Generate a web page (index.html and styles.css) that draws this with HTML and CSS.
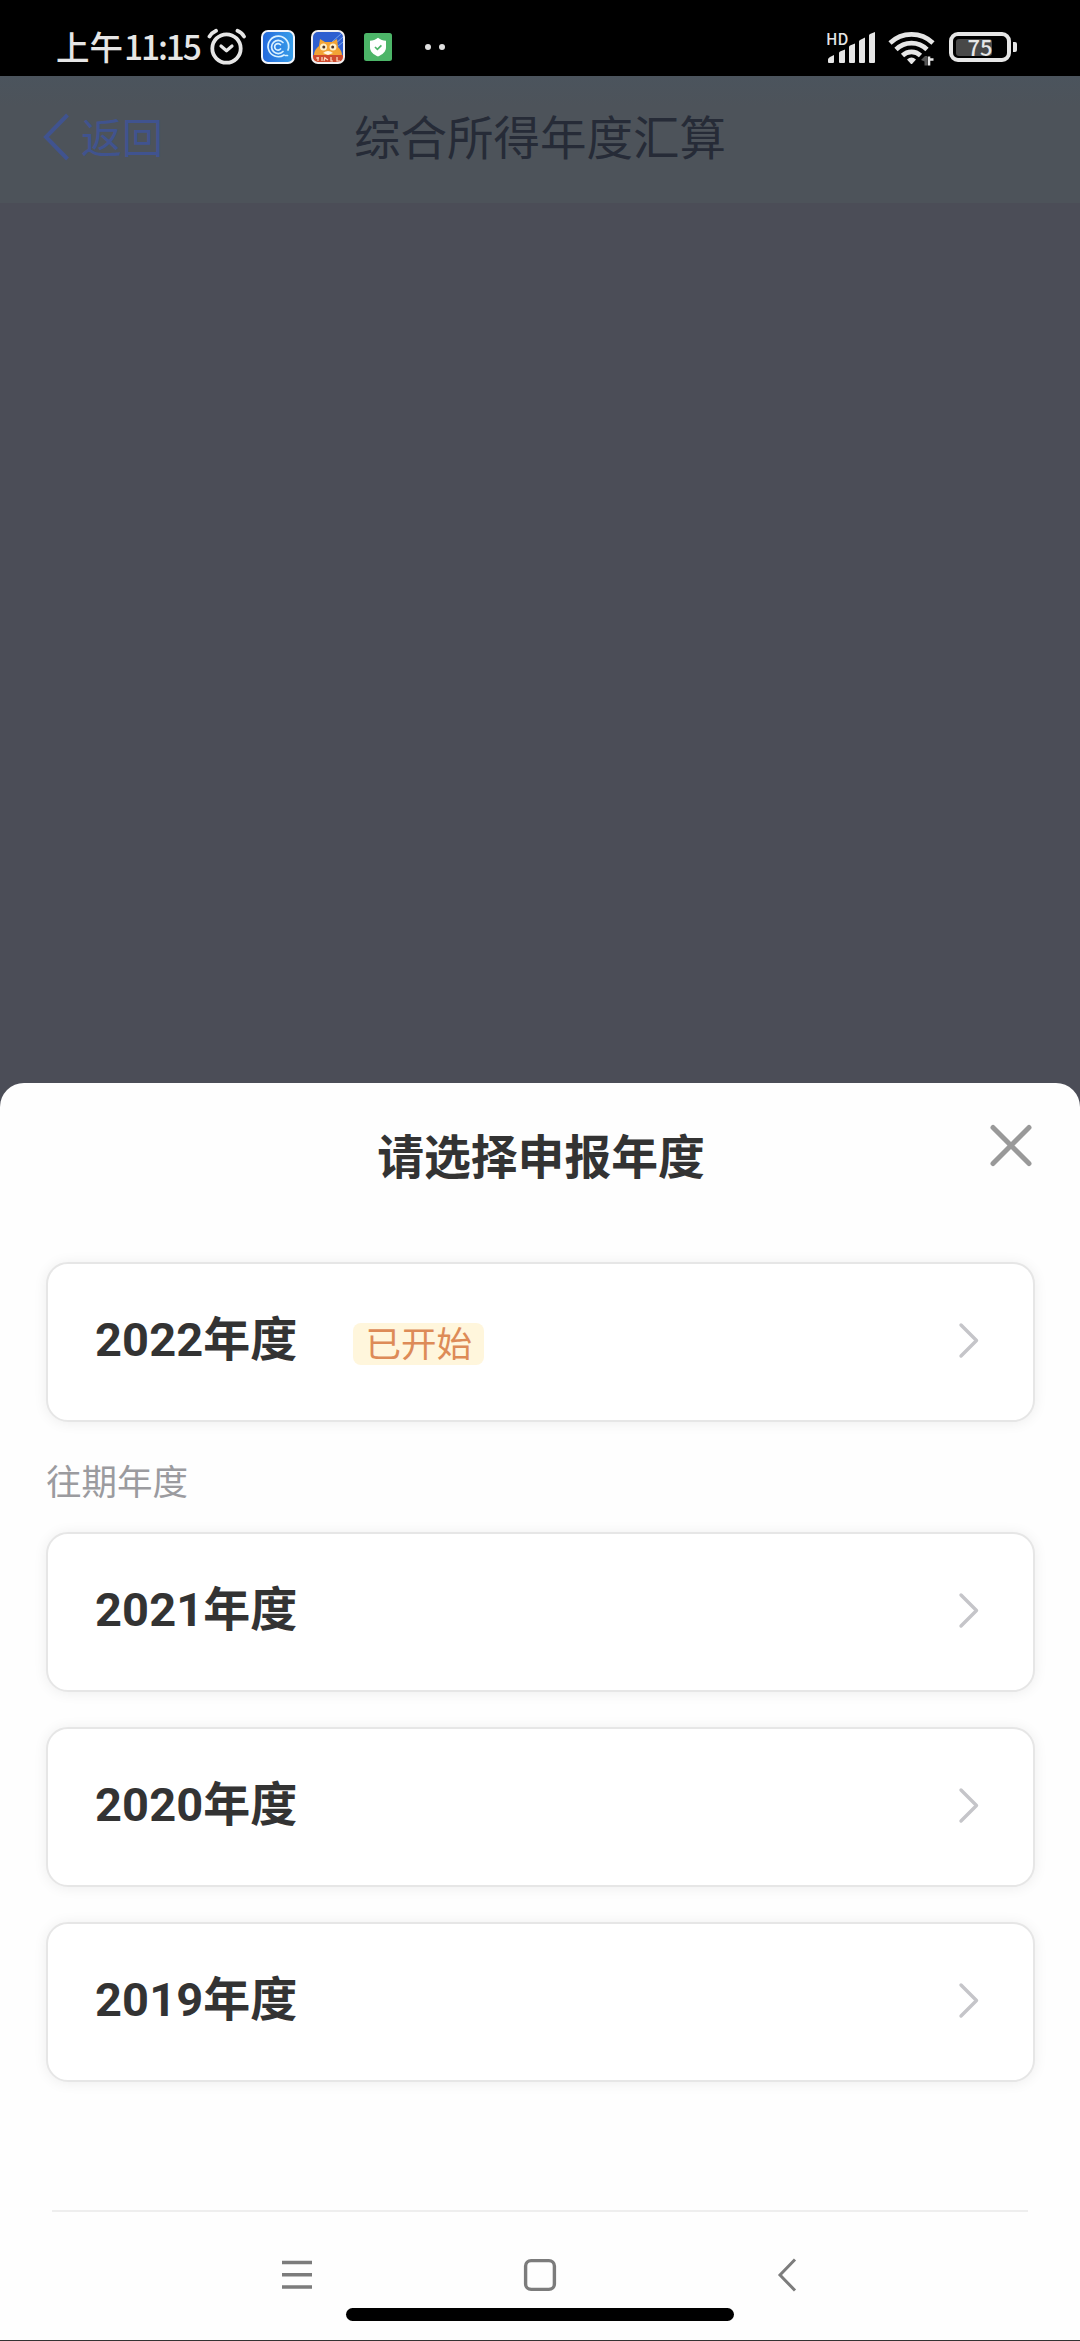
FILE: index.html
```html
<!DOCTYPE html>
<html lang="zh-CN">
<head>
<meta charset="utf-8">
<title>综合所得年度汇算</title>
<link rel="stylesheet" href="styles.css">
</head>
<body>
<div class="screen">
  <header class="status">
    <span class="clock"><span>上午</span><span class="digits">11:15</span></span>
    <svg class="alarm" width="40" height="38" viewBox="0 0 40 38" fill="none" stroke="#e6e6e6" stroke-linecap="round">
      <circle cx="19.500" cy="20.500" r="14.200" stroke-width="3.800"/>
      <path d="M14 18l5.500 4.800 5.500-4.800" stroke-width="3.200" stroke-linejoin="round"/>
      <path d="M2.500 8.500Q5 4.500 9 2.700M30.500 2.700Q35 4.500 37 8.500" stroke-width="3.800"/>
    </svg>
    <svg class="app app-one" width="34" height="34" viewBox="0 0 34 34" fill="none">
      <defs><linearGradient id="blue" x1="0" x2="1"><stop offset="0" stop-color="#2468dc"/><stop offset="1" stop-color="#38a0ea"/></linearGradient></defs>
      <rect x="1" y="1" width="32" height="32" rx="6" fill="url(#blue)" stroke="#f2f5fb" stroke-width="2"/>
      <g stroke="#d9f1ff" stroke-width="1.700" stroke-linecap="round">
        <path d="M24.500 25.500h2M23 25a10.300 10.300 0 1 1 4-5"/>
        <path d="M22 21.500a6.600 6.600 0 1 1 0-9"/>
        <path d="M19.500 19a3.300 3.300 0 1 1 0-4.300"/>
      </g>
    </svg>
    <svg class="app app-two" width="34" height="34" viewBox="0 0 34 34">
      <rect x="1" y="1" width="32" height="32" rx="6" fill="#2f5fd0"/>
      <path d="M21 12L31 3M24 14l8-7M26 17l6-5" stroke="#75a5f0" stroke-width="1"/>
      <path d="M3 26C3 20 6 18 8 16L9 9l5 3h7l5-3 1 8c3 3 4 5 4 9z" fill="#f2a335"/>
      <circle cx="12.500" cy="17" r="3.500" fill="#fff0c8"/><circle cx="22" cy="17" r="3.500" fill="#fff0c8"/>
      <circle cx="12.800" cy="17" r="1.500" fill="#4c3327"/><circle cx="21.700" cy="17" r="1.500" fill="#4c3327"/>
      <path d="M12 23q5-4 10 0l-5 2z" fill="#fff6e0"/>
      <path d="M2 25h30V32H2z" fill="#cf4a2d"/>
      <path d="M5 28h3M7 27v4M11 27v4M14 27l-1 4M14 28l3 2M20 27v4h2M26 27v4h3" stroke="#ffdfc5" stroke-width="1.200" fill="none"/>
      <rect x="1" y="1" width="32" height="32" rx="6" fill="none" stroke="#f2efef" stroke-width="2"/>
    </svg>
    <svg class="app-three" width="28" height="28" viewBox="0 0 28 28">
      <rect width="28" height="28" rx="2.500" fill="#4cb568"/>
      <path d="M14 4.800c2.500 2 5 2.700 8 2.900v6.500c0 4.600-3.500 7.200-8 9.300-4.500-2.100-8-4.700-8-9.300V7.700c3-.2 5.500-.9 8-2.900z" fill="#fff"/>
      <path d="M11 14l2.400 2.300 4-4" fill="none" stroke="#4cb568" stroke-width="1.700"/>
    </svg>
    <span class="dots"><i></i><i></i></span>
    <div class="signal">
      <span class="hd">HD</span>
      <svg width="50" height="34" viewBox="0 0 50 34" fill="#e6e6e6">
        <path d="M2 32V29.500Q2 28 4 27L8 25V32q0 1-1 1H3q-1 0-1-1zM13 32V23q0-1 1-1.500l5-2V32q0 1-1 1h-4q-1 0-1-1zM23 32V17q0-1 1-1.500l5-2V32q0 1-1 1h-4q-1 0-1-1zM33 32V11.500q0-1 1-1.500l5-2.500V32q0 1-1 1h-4q-1 0-1-1zM43 32V5.500q0-1 1-1.500l5-2V32q0 1-1 1h-4q-1 0-1-1z"/>
      </svg>
    </div>
    <svg class="wifi" width="48" height="36" viewBox="0 0 48 36" fill="none" stroke="#e6e6e6" stroke-width="4.600">
      <path d="M2 13a31 31 0 0 1 43 0M8 19.500a22 22 0 0 1 31 0M14.500 25.500a13 13 0 0 1 18 0"/>
      <path d="M19 29.500q4.500-4 9 0L24 34h-1z" fill="#e6e6e6" stroke="none"/>
      <path d="M33 30l4-4h2v9.500h-2.500v-4z" fill="#555" stroke="none"/>
      <path d="M41 26.500v9M41 29.500h4.500" stroke-width="2.600"/>
    </svg>
    <span class="battery"><i></i><b>75</b></span>
    <span class="nub"></span>
  </header>

  <nav class="topbar">
    <div class="back">
      <svg width="28" height="48" viewBox="0 0 28 48" fill="none" stroke="#40538f" stroke-width="4"><path d="M25.500 2L4 24l21.500 22"/></svg>
      <span>返回</span>
    </div>
    <h1>综合所得年度汇算</h1>
    <span></span>
  </nav>

  <main class="sheet">
    <div class="sheet-head">
      <h2>请选择申报年度</h2>
      <svg class="close" width="44" height="44" viewBox="0 0 44 44" stroke="#999" stroke-width="5" stroke-linecap="round"><path d="M4 3.500l36 36M40 3.500l-36 36"/></svg>
    </div>
    <section class="years">
      <div class="card"><span class="year">2022年度</span><span class="tag">已开始</span><svg class="chevron" width="24" height="38" viewBox="0 0 24 38"><path d="M4 3L19.500 18.500 4 34"/></svg></div>
    </section>
    <p class="label">往期年度</p>
    <section class="years">
      <div class="card"><span class="year">2021年度</span><svg class="chevron" width="24" height="38" viewBox="0 0 24 38"><path d="M4 3L19.500 18.500 4 34"/></svg></div>
      <div class="card"><span class="year">2020年度</span><svg class="chevron" width="24" height="38" viewBox="0 0 24 38"><path d="M4 3L19.500 18.500 4 34"/></svg></div>
      <div class="card"><span class="year">2019年度</span><svg class="chevron" width="24" height="38" viewBox="0 0 24 38"><path d="M4 3L19.500 18.500 4 34"/></svg></div>
    </section>
    <footer class="system">
      <div class="keys">
        <svg width="34" height="34" viewBox="0 0 34 34" stroke="#7c7c7c" stroke-width="3.400"><path d="M2 4.500h30M2 16.800h30M2 29h30"/></svg>
        <svg width="34" height="34" viewBox="0 0 34 34" fill="none" stroke="#7c7c7c" stroke-width="3.400"><rect x="2.600" y="2.600" width="28.800" height="28.800" rx="5.500"/></svg>
        <svg width="34" height="34" viewBox="0 0 34 34" fill="none" stroke="#7c7c7c" stroke-width="3"><path d="M29 1.500L14 17l15 15.500"/></svg>
      </div>
      <div class="home"></div>
    </footer>
  </main>
</div>
</body>
</html>
```
FILE: styles.css
```css
* { box-sizing: border-box; }
body {
  margin: 0;
  background: #4b4d57;
  font-family: "Noto Sans CJK SC", sans-serif;
}
h1, h2, p { margin: 0; font-weight: 400; }
svg { display: block; flex: none; }
.screen {
  width: 1080px;
  height: 2341px;
  display: flex;
  flex-direction: column;
  overflow: hidden;
}

.status {
  height: 76px;
  flex: none;
  display: flex;
  align-items: flex-start;
  background: #000;
  color: #e6e6e6;
  padding: 28px 63px 0 56px;
}
.clock {
  width: 151px;
  height: 40px;
  line-height: 36px;
  display: flex;
  font-size: 33.500px;
  font-weight: 500;
}
.clock .digits { margin-left: 1px; letter-spacing: -2.100px; }
.app { margin-top: 2px; }
.app-one { margin-left: 14px; }
.app-two { margin-left: 16px; }
.app-three { margin: 5px 0 0 19px; }
.dots { display: flex; gap: 8px; margin: 16px auto 0 33px; }
.dots i { width: 6px; height: 6px; border-radius: 3px; background: #e0e0e0; }
.signal { display: grid; margin-top: 2px; }
.signal > * { grid-area: 1 / 1; }
.hd { font-size: 15.500px; line-height: 16px; font-weight: 500; }
.wifi { margin: 2px 0 0 12px; }
.battery {
  display: grid;
  align-items: center;
  width: 62px;
  height: 30px;
  margin: 4px 0 0 13px;
  border: 4px solid #e6e6e6;
  border-radius: 9px;
}
.battery > * { grid-area: 1 / 1; }
.battery i { width: 36px; height: 17px; margin-left: 3px; border-radius: 3px; background: #484848; }
.battery b {
  text-align: center;
  font-size: 22px;
  line-height: 22px;
  font-weight: 500;
  margin-top: -2px;
}
.nub { width: 4px; height: 10px; margin: 14px 0 0 2px; border-radius: 0 2px 2px 0; background: #e6e6e6; }

.topbar {
  height: 127px;
  flex: none;
  display: grid;
  grid-template-columns: 1fr auto 1fr;
  align-items: center;
  padding: 0 42px 5px;
  background: linear-gradient(#4b545d, #4d535a 30px);
}
.back { display: flex; align-items: center; gap: 11px; color: #40538f; font-size: 41px; line-height: 48px; }
.back span { margin-top: -5px; }
h1 { font-size: 46.500px; line-height: 60px; margin-top: -5px; color: #262b37; }

.sheet {
  margin-top: 880px;
  flex: 1;
  display: flex;
  flex-direction: column;
  background: #fefefe;
  border-radius: 24px 24px 0 0;
  border-bottom: 1px solid #333;
}
.sheet-head {
  height: 179px;
  display: grid;
  grid-template-columns: 1fr auto 1fr;
  align-items: start;
  padding: 41px 47px 0 49px;
}
h2 { grid-column: 2; font-size: 46.800px; line-height: 64px; margin-top: -2px; font-weight: 700; color: #333; }
.close { justify-self: end; }
.years { display: flex; flex-direction: column; gap: 35px; padding: 0 45px 0 46px; }
.card {
  height: 160px;
  display: flex;
  align-items: center;
  padding: 0 52px 2px 47px;
  background: #fff;
  border: 2px solid #e6e6e6;
  border-radius: 22px;
  box-shadow: 0 1px 14px rgba(0, 0, 0, .07);
}
.year {
  font: 700 47px/60px Roboto, "Noto Sans CJK SC", sans-serif;
  letter-spacing: .1px;
  margin-top: -2px;
  color: #333;
}
.tag {
  margin: 5px 0 0 56px;
  padding: 0 12px;
  height: 42px;
  line-height: 38px;
  border-radius: 8px;
  background: #fff6dc;
  color: #dd8b57;
  font-size: 35.500px;
}
.chevron { margin-left: auto; fill: none; stroke: #c5c5c9; stroke-width: 3.400; stroke-linecap: round; stroke-linejoin: round; }
.label { padding: 0 46px; height: 110px; line-height: 116px; font-size: 35.500px; color: #9b9b9f; }
.system { margin: auto 52px 0; height: 130px; border-top: 2px solid #eee; }
.keys { display: flex; justify-content: space-between; padding: 46px 228px 0; }
.home { width: 388px; height: 13px; margin: 16px auto 0; border-radius: 7px; background: #000; }
```
